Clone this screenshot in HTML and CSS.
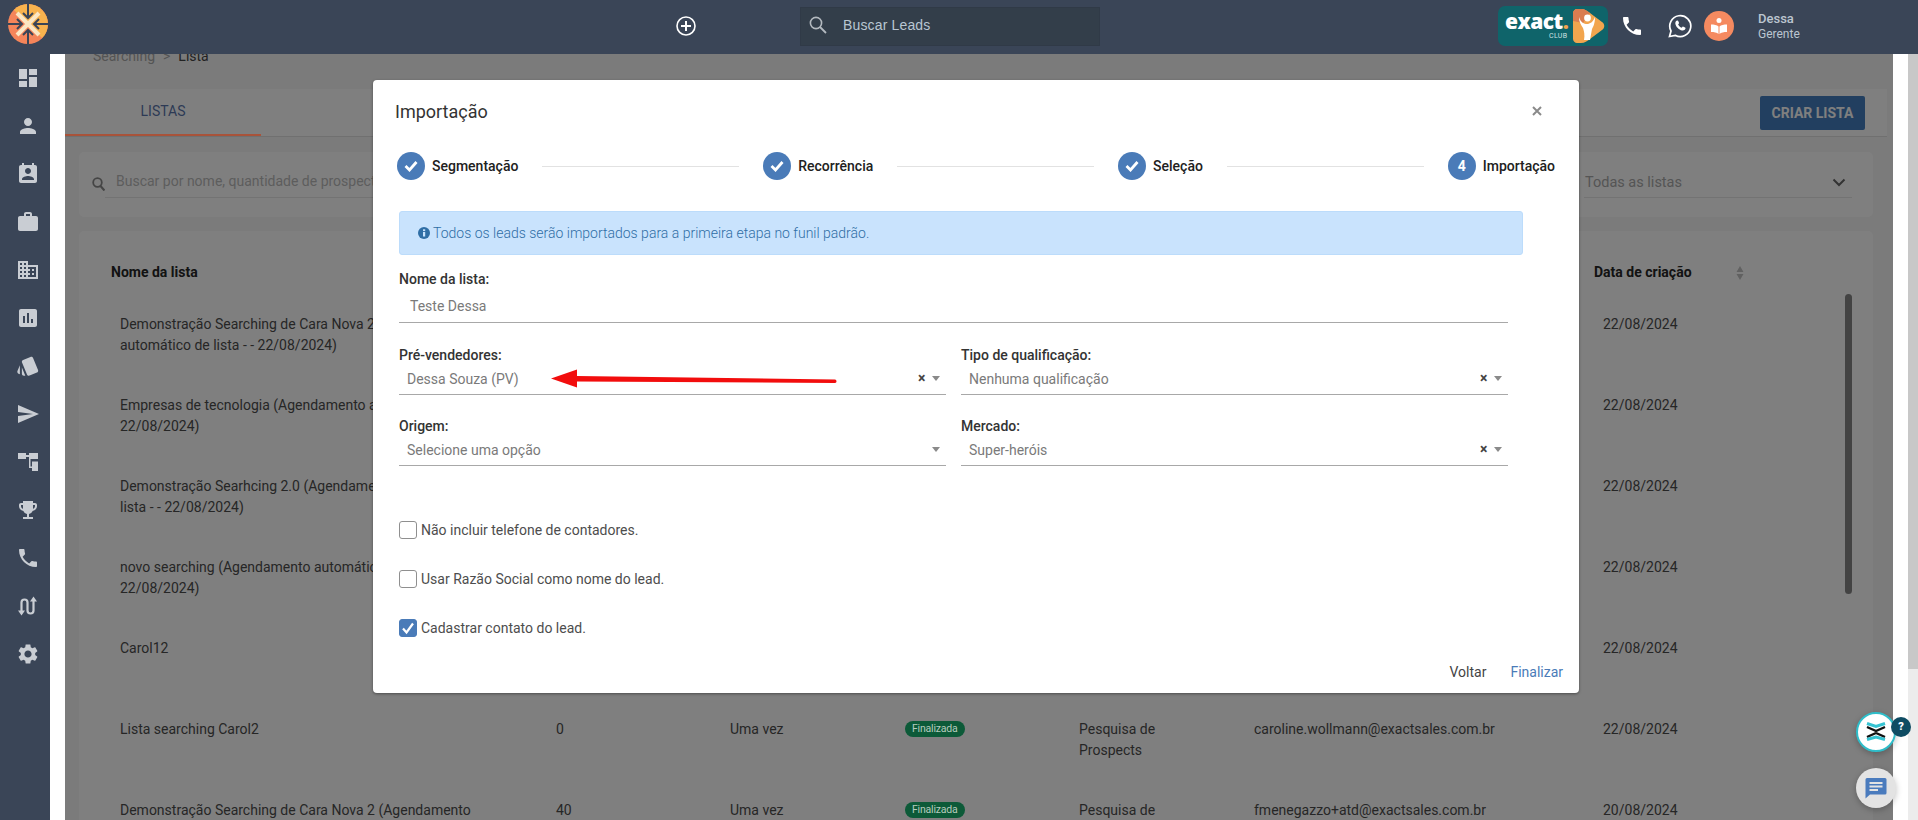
FILE: index.html
```html
<!DOCTYPE html>
<html lang="pt-BR">
<head>
<meta charset="utf-8">
<title>Importação</title>
<link rel="stylesheet" href="styles.css">
</head>
<body>
<div class="app">
  <header class="topbar">
    <div class="brand">
      <svg width="40" height="40" viewBox="0 0 40 40">
        <circle cx="20" cy="20" r="20" fill="#f5855a"/>
        <path d="M20 20 5.900 5.900A20 20 0 0 1 34.100 5.900Z" fill="#f8b34e"/>
        <path d="M20 20 34.100 5.900A20 20 0 0 1 34.100 34.100Z" fill="#f8b34e"/>
        <path d="M9 9 31 31M31 9 9 31" stroke="#fbe7c4" stroke-width="4"/>
        <path d="M20 0V13M20 27V40M0 20H13M27 20H40" stroke="#3a4557" stroke-width="2"/>
        <path d="M15 9 20 14 25 9M15 31 20 26 25 31M9 15 14 20 9 25M31 15 26 20 31 25" fill="none" stroke="#3a4557" stroke-width="2"/>
      </svg>
    </div>
    <svg class="add-icon" width="20" height="20" viewBox="0 0 20 20"><circle cx="10" cy="10" r="9" fill="none" stroke="#fff" stroke-width="1.600"/><path d="M10 5V15M5 10H15" stroke="#fff" stroke-width="2"/></svg>
    <div class="lead-search">
      <svg width="20" height="20" viewBox="0 0 20 20"><circle cx="8" cy="8" r="5.600" fill="none" stroke="#b4bac0" stroke-width="1.600"/><path d="M12 12 18 18" stroke="#b4bac0" stroke-width="1.800"/></svg>
      <span>Buscar Leads</span>
    </div>
    <div class="club">
      <div class="club-word"><span class="club-name">exact<b>.</b></span><span class="club-sub">CLUB</span></div>
      <svg width="32" height="34" viewBox="0 0 32 34">
        <path d="M4 0H8C12 0 14 2 17 4L29 13C32 15 32 19 29 21L17 30C14 32 12 34 8 34H4C2 34 0 32 0 30V4C0 2 2 0 4 0Z" fill="#f2a54e"/>
        <path d="M4 0H8C12 0 14 2 17 4L10 14 0 12V4C0 2 2 0 4 0Z" fill="#d97c50"/>
        <path d="M6 8C8 14 11 15 14 15 17 15 20 13 22 8 22 15 20 18 19 20L17 31H11C12 26 11 22 10 19 8 16 6 13 6 8Z" fill="#fff"/>
        <circle cx="14.500" cy="9" r="3.400" fill="#fff"/>
      </svg>
    </div>
    <svg class="call-icon" width="24" height="24" viewBox="0 0 24 24"><path fill="#fff" d="M6.620 10.790c1.440 2.830 3.760 5.140 6.590 6.590l2.200-2.200c.27-.27.67-.36 1.020-.24 1.120.37 2.330.57 3.570.57.55 0 1 .45 1 1V20c0 .55-.45 1-1 1-9.390 0-17-7.610-17-17 0-.55.45-1 1-1h3.500c.55 0 1 .45 1 1 0 1.250.2 2.450.57 3.570.11.35.03.74-.25 1.020l-2.200 2.200z"/></svg>
    <svg class="whats-icon" width="24" height="24" viewBox="0 0 24 24"><path fill="none" stroke="#fff" stroke-width="1.700" d="M1.500 22.500 3 17A10.500 10.500 0 1 1 7.200 21.300Z"/><path fill="#fff" d="M8.800 6.800c.6-.5 1.100-.4 1.400.2l.8 1.800c.1.400 0 .7-.3 1l-.6.700c.8 1.500 2 2.600 3.500 3.300l.8-.9c.3-.3.6-.4 1-.2l1.700.8c.5.300.5.800.3 1.300-.5 1.300-1.900 1.900-3.300 1.600-3.200-.7-6-3.500-6.700-6.500-.2-1.200.1-2.300.9-3.100z"/></svg>
    <div class="learn-icon">
      <svg width="20" height="20" viewBox="0 0 20 20"><circle cx="10" cy="4.500" r="2.500" fill="#fff"/><path fill="#fff" d="M2 8.500C5 8.500 8 9 9.500 10.500V18C8 16.500 5 16 2 16ZM18 8.500C15 8.500 12 9 10.500 10.500V18C12 16.500 15 16 18 16Z"/></svg>
    </div>
    <div class="user"><strong>Dessa</strong><span>Gerente</span></div>
  </header>

  <div class="workspace">
    <nav class="sidenav">
      <svg viewBox="0 0 24 24"><path d="M3 13h8V3H3v10zm0 8h8v-6H3v6zm10 0h8V11h-8v10zm0-18v6h8V3h-8z"/></svg>
      <svg viewBox="0 0 24 24"><path d="M12 12c2.210 0 4-1.790 4-4s-1.790-4-4-4-4 1.790-4 4 1.790 4 4 4zm0 2c-2.670 0-8 1.340-8 4v2h16v-2c0-2.660-5.330-4-8-4z"/></svg>
      <svg viewBox="0 0 24 24"><path d="M19 3h-1V1h-2v2H8V1H6v2H5c-1.110 0-2 .9-2 2v14c0 1.100.89 2 2 2h14c1.100 0 2-.9 2-2V5c0-1.100-.9-2-2-2zm-7 3c1.660 0 3 1.340 3 3s-1.340 3-3 3-3-1.340-3-3 1.340-3 3-3zm6 12H6v-1c0-2 4-3.100 6-3.100s6 1.100 6 3.100v1z"/></svg>
      <svg viewBox="0 0 24 24"><path d="M20 6h-4V4c0-1.110-.89-2-2-2h-4c-1.110 0-2 .89-2 2v2H4c-1.110 0-1.990.89-1.990 2L2 19c0 1.110.89 2 2 2h16c1.110 0 2-.89 2-2V8c0-1.110-.89-2-2-2zm-6 0h-4V4h4v2z"/></svg>
      <svg viewBox="0 0 24 24"><path d="M12 7V3H2v18h20V7H12zM6 19H4v-2h2v2zm0-4H4v-2h2v2zm0-4H4V9h2v2zm0-4H4V5h2v2zm4 12H8v-2h2v2zm0-4H8v-2h2v2zm0-4H8V9h2v2zm0-4H8V5h2v2zm10 12h-8v-2h2v-2h-2v-2h2v-2h-2V9h8v10zm-2-8h-2v2h2v-2zm0 4h-2v2h2v-2z"/></svg>
      <svg viewBox="0 0 24 24"><path d="M19 3H5c-1.100 0-2 .9-2 2v14c0 1.100.9 2 2 2h14c1.100 0 2-.9 2-2V5c0-1.100-.9-2-2-2zM9 17H7v-7h2v7zm4 0h-2V7h2v10zm4 0h-2v-4h2v4z"/></svg>
      <svg viewBox="0 0 24 24"><path d="M2.530 19.650l1.340.56v-9.030l-2.430 5.860c-.41 1.020.08 2.190 1.090 2.610zm19.500-3.700L17.070 3.980c-.31-.75-1.040-1.210-1.810-1.230-.26 0-.53.04-.79.15L7.100 5.950c-.75.31-1.210 1.030-1.230 1.800-.01.27.04.54.15.8l4.960 11.970c.31.76 1.050 1.220 1.830 1.230.26 0 .52-.05.77-.15l7.360-3.050c1.020-.42 1.510-1.590 1.090-2.600zM5.880 19.750c0 1.100.9 2 2 2h1.450l-3.450-8.340v6.340z"/></svg>
      <svg viewBox="0 0 24 24"><path d="M2.010 21L23 12 2.010 3 2 10l15 2-15 2z"/></svg>
      <svg viewBox="0 0 24 24"><path d="M2 3h8v6H2zM10 5h3v2h-3zM13 3h9v6h-9zM13 9h1.500v9H13zM14.500 16.500H16v1.500h-1.500zM16 11.500h6V21h-6z"/></svg>
      <svg viewBox="0 0 24 24"><path d="M19 5h-2V3H7v2H5c-1.100 0-2 .9-2 2v1c0 2.550 1.920 4.630 4.390 4.940.63 1.500 1.980 2.630 3.610 2.960V19H7v2h10v-2h-4v-3.100c1.630-.33 2.980-1.460 3.610-2.960C19.080 12.630 21 10.550 21 8V7c0-1.100-.9-2-2-2zM5 8V7h2v3.820C5.840 10.400 5 9.300 5 8zm14 0c0 1.300-.84 2.400-2 2.820V7h2v1z"/></svg>
      <svg viewBox="0 0 24 24"><path d="M6.620 10.790c1.440 2.830 3.760 5.140 6.590 6.590l2.200-2.200c.27-.27.67-.36 1.020-.24 1.120.37 2.330.57 3.570.57.55 0 1 .45 1 1V20c0 .55-.45 1-1 1-9.390 0-17-7.610-17-17 0-.55.45-1 1-1h3.500c.55 0 1 .45 1 1 0 1.250.2 2.450.57 3.570.11.35.03.74-.25 1.020l-2.200 2.200z"/></svg>
      <svg viewBox="0 0 24 24"><path class="route" d="M5.500 18V8.500a3 3 0 0 1 6 0v8a3 3 0 0 0 6 0V6"/><path d="M2 16.500h7l-3.500 5zM14 7.500h7l-3.500-5z"/></svg>
      <svg viewBox="0 0 24 24"><path d="M19.140 12.940c.04-.3.06-.61.06-.94 0-.32-.02-.64-.07-.94l2.030-1.580c.18-.14.23-.41.12-.61l-1.920-3.320c-.12-.22-.37-.29-.59-.22l-2.390.96c-.5-.38-1.030-.7-1.620-.94l-.36-2.540c-.04-.24-.24-.41-.48-.41h-3.840c-.24 0-.43.17-.47.41l-.36 2.540c-.59.24-1.130.57-1.620.94l-2.390-.96c-.22-.08-.47 0-.59.22L2.740 8.870c-.12.21-.08.47.12.61l2.030 1.580c-.05.3-.09.63-.09.94s.02.64.07.94l-2.030 1.580c-.18.14-.23.41-.12.61l1.920 3.320c.12.22.37.29.59.22l2.390-.96c.5.38 1.030.7 1.620.94l.36 2.540c.05.24.24.41.48.41h3.840c.24 0 .44-.17.47-.41l.36-2.540c.59-.24 1.130-.56 1.620-.94l2.390.96c.22.08.47 0 .59-.22l1.920-3.320c.12-.22.07-.47-.12-.61l-2.010-1.580zM12 15.600c-1.980 0-3.600-1.620-3.600-3.600s1.620-3.600 3.600-3.600 3.600 1.620 3.600 3.600-1.620 3.600-3.600 3.600z"/></svg>
    </nav>

    <div class="gutter"></div>

    <main class="page">
      <div class="breadcrumb"><span>Searching</span><span class="crumb-sep">&gt;</span><span class="crumb-current">Lista</span></div>

      <div class="tabs">
        <div class="tab-active">LISTAS</div>
        <button class="btn-create">CRIAR LISTA</button>
      </div>

      <section class="filters">
        <div class="filter-search">
          <svg width="13" height="14" viewBox="0 0 13 14"><circle cx="5.500" cy="5.500" r="4.300" fill="none" stroke="#8a8a8a" stroke-width="1.800"/><path d="M8.500 9 12.500 13.500" stroke="#8a8a8a" stroke-width="2.200"/></svg>
          <span class="filter-input">Buscar por nome, quantidade de prospects</span>
        </div>
        <div class="filter-select">
          <span>Todas as listas</span>
          <svg width="14" height="9" viewBox="0 0 14 9"><path d="M1.500 1.500 7 7l5.500-5.500" fill="none" stroke="#666" stroke-width="2"/></svg>
        </div>
      </section>

      <section class="list-card">
        <div class="list-grid list-head">
          <div class="th">Nome da lista</div>
          <div></div><div></div><div></div><div></div><div></div>
          <div class="th th-sort">Data de criação
            <svg width="8" height="16" viewBox="0 0 8 16"><path d="M4 1 7.500 7H.5zM4 15 .5 9h7z" fill="#c2c2c2"/></svg>
          </div>
        </div>
        <div class="list-grid"><div class="cell-name">Demonstração Searching de Cara Nova 2 (Agendamento automático de lista - - 22/08/2024)</div><div></div><div></div><div></div><div></div><div></div><div>22/08/2024</div></div>
        <div class="list-grid"><div class="cell-name">Empresas de tecnologia (Agendamento automático de lista - - 22/08/2024)</div><div></div><div></div><div></div><div></div><div></div><div>22/08/2024</div></div>
        <div class="list-grid"><div class="cell-name">Demonstração Searhcing 2.0 (Agendamento automático de lista - - 22/08/2024)</div><div></div><div></div><div></div><div></div><div></div><div>22/08/2024</div></div>
        <div class="list-grid"><div class="cell-name">novo searching (Agendamento automático de lista - - 22/08/2024)</div><div></div><div></div><div></div><div></div><div></div><div>22/08/2024</div></div>
        <div class="list-grid"><div class="cell-name">Carol12</div><div></div><div></div><div></div><div></div><div></div><div>22/08/2024</div></div>
        <div class="list-grid"><div class="cell-name">Lista searching Carol2</div><div>0</div><div>Uma vez</div><div><span class="badge">Finalizada</span></div><div class="cell-source">Pesquisa de Prospects</div><div>caroline.wollmann@exactsales.com.br</div><div>22/08/2024</div></div>
        <div class="list-grid"><div class="cell-name">Demonstração Searching de Cara Nova 2 (Agendamento</div><div>40</div><div>Uma vez</div><div><span class="badge">Finalizada</span></div><div class="cell-source">Pesquisa de Prospects</div><div>fmenegazzo+atd@exactsales.com.br</div><div>20/08/2024</div></div>
        <div class="list-scroll"></div>
      </section>

      <div class="backdrop"></div>

      <div class="modal">
        <div class="modal-head">
          <h2>Importação</h2>
          <svg width="10" height="10" viewBox="0 0 10 10"><path d="M1 1 9 9M9 1 1 9" stroke="#8a8a8a" stroke-width="2"/></svg>
        </div>

        <div class="stepper">
          <div class="step"><span class="step-dot"><svg width="14" height="12" viewBox="0 0 14 12"><path d="M1.500 6 5.500 10 12.500 2" fill="none" stroke="#fff" stroke-width="2.800"/></svg></span>Segmentação</div>
          <div class="step-line"></div>
          <div class="step"><span class="step-dot"><svg width="14" height="12" viewBox="0 0 14 12"><path d="M1.500 6 5.500 10 12.500 2" fill="none" stroke="#fff" stroke-width="2.800"/></svg></span>Recorrência</div>
          <div class="step-line"></div>
          <div class="step"><span class="step-dot"><svg width="14" height="12" viewBox="0 0 14 12"><path d="M1.500 6 5.500 10 12.500 2" fill="none" stroke="#fff" stroke-width="2.800"/></svg></span>Seleção</div>
          <div class="step-line"></div>
          <div class="step"><span class="step-dot">4</span>Importação</div>
        </div>

        <div class="alert">
          <svg width="12" height="12" viewBox="0 0 12 12"><circle cx="6" cy="6" r="6" fill="#2f6ea5"/><rect x="5" y="5" width="2.200" height="4.500" fill="#c9e3fd"/><rect x="5" y="2.300" width="2.200" height="1.800" fill="#c9e3fd"/></svg>
          <span>Todos os leads serão importados para a primeira etapa no funil padrão.</span>
        </div>

        <div class="form">
          <div class="field field-wide">
            <label class="field-label">Nome da lista:</label>
            <div class="control control-text">Teste Dessa</div>
          </div>
          <div class="field">
            <label class="field-label">Pré-vendedores:</label>
            <div class="control"><span>Dessa Souza (PV)</span><i class="clear">×</i><i class="caret"></i></div>
          </div>
          <div class="field">
            <label class="field-label">Tipo de qualificação:</label>
            <div class="control"><span>Nenhuma qualificação</span><i class="clear">×</i><i class="caret"></i></div>
          </div>
          <div class="field">
            <label class="field-label">Origem:</label>
            <div class="control"><span>Selecione uma opção</span><i class="caret"></i></div>
          </div>
          <div class="field">
            <label class="field-label">Mercado:</label>
            <div class="control"><span>Super-heróis</span><i class="clear">×</i><i class="caret"></i></div>
          </div>
        </div>

        <div class="checks">
          <div class="check"><span class="box"></span>Não incluir telefone de contadores.</div>
          <div class="check"><span class="box"></span>Usar Razão Social como nome do lead.</div>
          <div class="check"><span class="box box-on"><svg width="14" height="14" viewBox="0 0 14 14"><path d="M2 7.500 5.500 11.500 12 2.500" fill="none" stroke="#fff" stroke-width="2.200"/></svg></span>Cadastrar contato do lead.</div>
        </div>

        <div class="modal-foot">
          <span class="btn-back">Voltar</span>
          <span class="btn-finish">Finalizar</span>
        </div>

        <svg class="annotation" width="290" height="22" viewBox="0 0 290 22">
          <path d="M0 9.500 26 .5V7L284 10.500C286 10.700 286 14 284 14L26 12.500V18.500Z" fill="#f20d0d"/>
        </svg>
      </div>
    </main>

    <div class="gutter"></div>
    <div class="pagebar"><div class="pagebar-thumb"></div></div>
  </div>

  <div class="floaters">
    <div class="fab fab-help">
      <svg width="20" height="20" viewBox="0 0 20 20"><path d="M1 1.500 10 4.500 19 1.500" fill="none" stroke="#35c3d2" stroke-width="3"/><path d="M1 5 10 9 19 5M1 15 10 11 19 15" fill="none" stroke="#111" stroke-width="2.400"/><path d="M1 17.500 10 15 19 17.500" fill="none" stroke="#35c3d2" stroke-width="3"/></svg>
      <span class="fab-q">?</span>
    </div>
    <div class="fab fab-chat">
      <svg width="22" height="22" viewBox="0 0 22 22"><path fill="#4a7bbd" d="M2 1H20A1.500 1.500 0 0 1 21.500 2.500V16A1.500 1.500 0 0 1 20 17.500H5L.5 21.500V2.500A1.500 1.500 0 0 1 2 1Z"/><path d="M4.500 6H17.500M4.500 9.500H17.500M4.500 13H13" stroke="#e3e3e3" stroke-width="1.800"/></svg>
    </div>
  </div>
</div>
</body>
</html>
```

FILE: styles.css
```css
* { box-sizing: border-box; }
html, body { margin: 0; height: 100%; overflow: hidden; }
body { font-family: Roboto, "Liberation Sans", sans-serif; font-size: 14px; color: #4a4a4a; background: #fff; }
svg { display: block; flex: none; }

.app { position: relative; display: flex; flex-direction: column; height: 820px; overflow: hidden; }

/* top bar */
.topbar { display: flex; align-items: center; height: 54px; flex: none; padding-bottom: 2px; background: #3a4557; }
.brand { width: 56px; height: 54px; flex: none; padding: 4px 0 0 8px; align-self: flex-start; }
.add-icon { margin-left: 620px; }
.lead-search { display: flex; align-items: center; gap: 15px; width: 300px; height: 39px; margin-left: 104px; padding: 0 0 2px 7px; background: #333e4a; border: 1px solid #303a47; color: #b9c6d2; font-family: "Liberation Sans", Arial, sans-serif; font-size: 14px; letter-spacing: .15px; }
.club { display: flex; align-items: center; justify-content: space-between; width: 110px; height: 40px; margin-left: 398px; padding: 0 3px 0 7px; border-radius: 7px; background: #0f646a; }
.club-word { display: flex; flex-direction: column; align-items: flex-end; color: #fff; }
.club-name { font-family: "Open Sans", sans-serif; font-weight: 800; font-size: 21px; line-height: 21px; letter-spacing: -.5px; }
.club-name b { color: #f2a54e; }
.club-sub { font-size: 7px; line-height: 9px; color: #cfe3e3; letter-spacing: .3px; margin-right: 1px; }
.call-icon { margin-left: 12px; }
.whats-icon { margin-left: 24px; }
.learn-icon { display: flex; align-items: center; justify-content: center; width: 30px; height: 30px; margin-left: 12px; border-radius: 50%; background: #f58a60; }
.user { display: flex; flex-direction: column; margin-left: 24px; color: #bcc5d0; }
.user strong { font-weight: 500; font-size: 13px; line-height: 16px; }
.user span { font-size: 12px; line-height: 15px; }

/* frame */
.workspace { display: flex; flex: 1; min-height: 0; }
.sidenav { display: flex; flex-direction: column; width: 50px; flex: none; padding-left: 16px; background: #3a4557; }
.sidenav svg { width: 24px; height: 24px; margin: 12px 0; fill: #c9cdd3; }
.sidenav .route { fill: none; stroke: #c9cdd3; stroke-width: 2.200; }
.gutter { width: 15px; flex: none; background: #fff; }
.pagebar { width: 10px; flex: none; background: #ececec; }
.pagebar-thumb { height: 615px; background: #c8c8c8; }

/* page under the dialog */
.page { position: relative; flex: 1; min-width: 0; overflow: hidden; background: #f6f6f6; }
.breadcrumb { display: flex; gap: 8px; height: 24px; margin: -10px 0 21px; padding-left: 28px; line-height: 24px; color: #a8a8a8; font-size: 14px; }
.crumb-current { color: #444; }
.tabs { display: flex; align-items: flex-start; justify-content: space-between; height: 48px; margin-right: 6px; background: #fff; border-bottom: 1px solid #e0e0e0; }
.tab-active { position: relative; z-index: 1; width: 196px; height: 47px; line-height: 44px; text-align: center; color: #2d3a55; border-bottom: 2px solid #a8533a; }
.btn-create { width: 105px; height: 34px; margin: 7px 22px 0 0; padding: 0; border: 0; border-radius: 2px; background: #457fc0; color: #fff; font: 700 14px Roboto, sans-serif; }

.filters { display: flex; justify-content: space-between; height: 65px; margin: 15px 20px 0 14px; padding: 0 21px 0 13px; border-radius: 5px; background: #fff; }
.filter-search { display: flex; align-items: flex-end; height: 46px; }
.filter-search svg { margin-bottom: 7px; }
.filter-input { display: flex; align-items: flex-end; width: 1400px; height: 46px; padding: 0 0 6px 11px; border-bottom: 1px solid #e6e6e6; color: #bbb; line-height: 20px; }
.filter-select { display: flex; align-items: center; justify-content: space-between; width: 268px; height: 46px; padding: 15px 6px 0 1px; border-bottom: 1px solid #e6e6e6; color: #aaa; font-size: 14.500px; }

.list-card { position: relative; height: 640px; margin: 14px 20px 0 14px; border-radius: 5px; background: #fff; }
.list-grid { display: grid; grid-template-columns: 436px 174px 175px 174px 175px 349px 200px; height: 81px; padding-left: 41px; line-height: 21px; color: #4d4d4d; }
.list-head { height: 82.500px; padding-top: 31px; }
.th { margin-left: -9px; font-weight: 700; color: #262626; white-space: nowrap; }
.th-sort { display: flex; align-items: center; gap: 44px; height: 21px; }
.cell-name { width: 390px; }
.cell-source { width: 110px; }
.badge { position: relative; z-index: 1; display: inline-block; height: 16px; padding: 0 7px; border-radius: 8px; background: #0c5a38; color: #b5cbbd; font-size: 10.500px; line-height: 16px; vertical-align: 2px; letter-spacing: -.2px; }
.list-scroll { position: absolute; left: 1766px; top: 63px; width: 7px; height: 300px; border-radius: 4px; background: #878787; }

.backdrop { position: absolute; inset: 0; background: rgba(0, 0, 0, .5); }

/* dialog */
.modal { position: absolute; z-index: 2; left: 308px; top: 26px; width: 1206px; height: 613px; border-radius: 4px; background: #fff; box-shadow: 0 1px 3px rgba(0, 0, 0, .4); }
.modal-head { display: flex; align-items: center; justify-content: space-between; height: 62px; padding: 0 37px 0 22px; }
.modal-head h2 { margin: 0; font-size: 18px; font-weight: 400; color: #333; }
.stepper { display: flex; align-items: center; width: 1158px; height: 28px; margin: 10px 0 0 24px; }
.step { display: flex; align-items: center; gap: 7px; font-weight: 500; color: #212121; white-space: nowrap; }
.step-dot { display: flex; align-items: center; justify-content: center; width: 28px; height: 28px; border-radius: 50%; background: #4a7bb8; color: #fff; font-weight: 700; }
.step-line { flex: 1; height: 1px; margin: 0 24px; background: #e2e2e2; }
.alert { display: flex; align-items: center; gap: 3px; width: 1124px; height: 44px; margin: 31px 0 0 26px; padding-left: 18px; border: 1px solid #bcdcfb; border-radius: 3px; background: #c9e3fd; color: #2f6ea5; font-weight: 300; }
.form { display: grid; grid-template-columns: 547px 547px; column-gap: 15px; row-gap: 21px; width: 1109px; margin: 14px 0 0 26px; }
.field-wide { grid-column: 1 / -1; margin-bottom: 1px; }
.field-label { display: block; height: 20px; line-height: 20px; color: #333; font-weight: 500; }
.control { display: flex; align-items: center; height: 30px; padding: 0 6px 2px 8px; border-bottom: 1px solid #a8a8a8; color: #7a7a7a; }
.control span { flex: 1; }
.control-text { height: 34px; padding: 0 0 0 11px; }
.clear { width: 11px; margin-right: 3px; font-style: normal; font-weight: 700; color: #444; font-size: 14px; line-height: 13px; }
.caret { width: 0; height: 0; border-left: 4px solid transparent; border-right: 4px solid transparent; border-top: 5px solid #8a8a8a; }
.checks { display: flex; flex-direction: column; margin: 40px 0 0 26px; }
.check { display: flex; align-items: center; gap: 4px; height: 48.750px; color: #4d4d4d; }
.box { display: flex; align-items: center; justify-content: center; width: 18px; height: 18px; border: 1px solid #8f8f8f; border-radius: 3px; background: #fff; }
.box-on { border-color: #4a7bb8; background: #4a7bb8; }
.modal-foot { display: flex; justify-content: flex-end; gap: 24px; margin-top: 10px; padding-right: 16px; line-height: 20px; }
.btn-back { color: #444; }
.btn-finish { color: #4a7bb8; }
.annotation { position: absolute; left: 178px; top: 289px; }

/* floating helpers */
.floaters { position: absolute; left: 1856px; top: 712px; display: flex; flex-direction: column; gap: 16px; }
.fab { position: relative; display: flex; align-items: center; justify-content: center; width: 40px; height: 40px; border-radius: 50%; box-shadow: 0 2px 6px rgba(0, 0, 0, .25); }
.fab-help { background: #fff; border: 2px solid #2fbdc9; }
.fab-chat { background: #e3e3e3; }
.fab-q { position: absolute; left: 33px; top: 3px; width: 20px; height: 20px; border-radius: 50%; background: #0f4c63; color: #fff; font-size: 11px; font-weight: 900; line-height: 20px; text-align: center; }
```
